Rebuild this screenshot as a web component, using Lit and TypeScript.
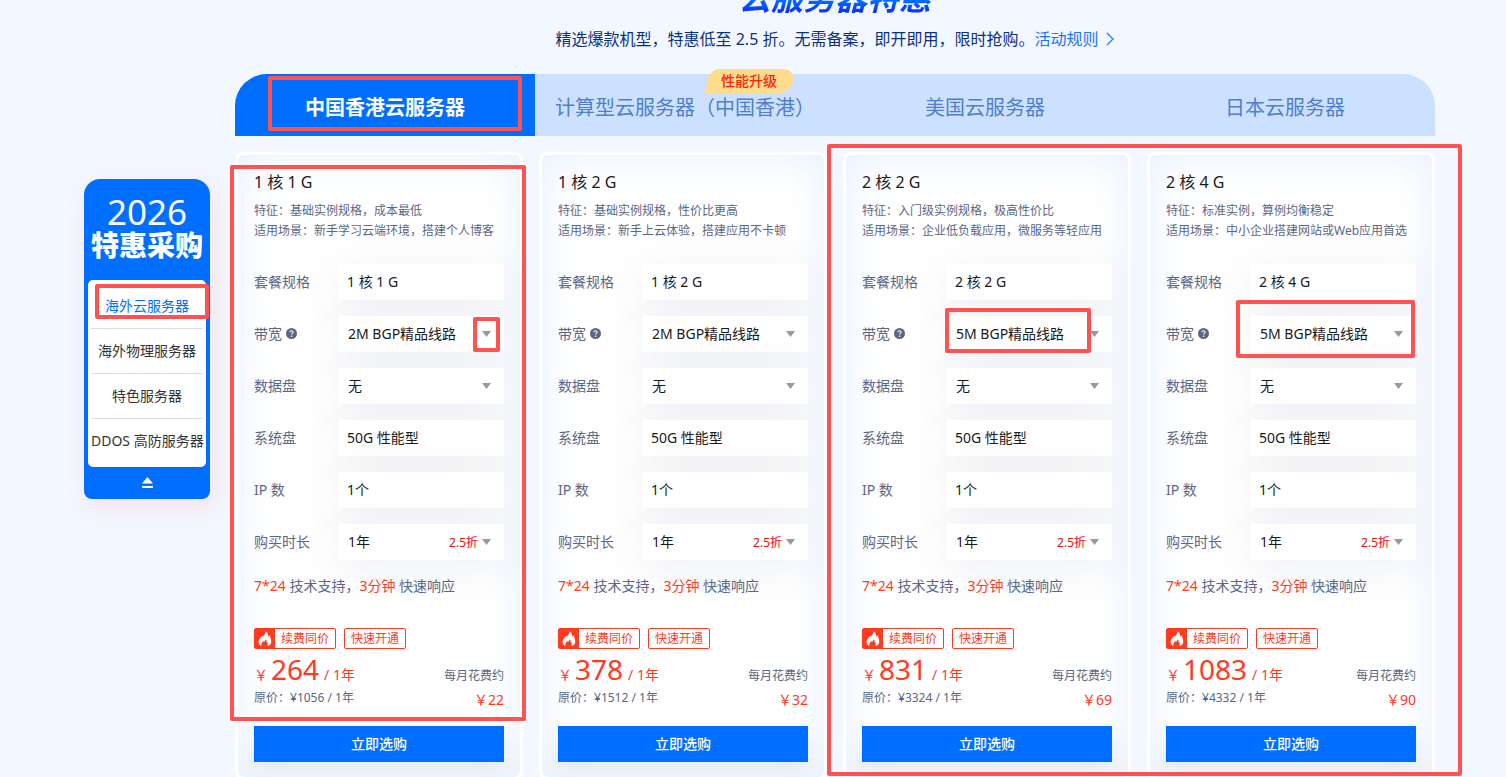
import { LitElement, html, css, svg } from "lit";
import { customElement, property, state } from "lit/decorators.js";

interface Plan {
  spec: string;
  feature: string;
  scene: string;
  bandwidth: string;
  price: number;
  original: number;
  monthly: number;
}

const PLANS: Plan[] = [
  { spec: "1 核 1 G", feature: "基础实例规格，成本最低", scene: "新手学习云端环境，搭建个人博客", bandwidth: "2M BGP精品线路", price: 264, original: 1056, monthly: 22 },
  { spec: "1 核 2 G", feature: "基础实例规格，性价比更高", scene: "新手上云体验，搭建应用不卡顿", bandwidth: "2M BGP精品线路", price: 378, original: 1512, monthly: 32 },
  { spec: "2 核 2 G", feature: "入门级实例规格，极高性价比", scene: "企业低负载应用，微服务等轻应用", bandwidth: "5M BGP精品线路", price: 831, original: 3324, monthly: 69 },
  { spec: "2 核 4 G", feature: "标准实例，算例均衡稳定", scene: "中小企业搭建网站或Web应用首选", bandwidth: "5M BGP精品线路", price: 1083, original: 4332, monthly: 90 },
];

const caret = svg`<svg class="caret" width="9" height="6" viewBox="0 0 9 6" aria-hidden="true"><path d="M0 0h9L4.5 6z" fill="#999"/></svg>`;

@customElement("plan-card")
export class PlanCard extends LitElement {
  static styles = css`
    :host {
      display: block;
      box-sizing: border-box;
      min-width: 0;
      padding: 15px 16px;
      border: 3px solid #fff;
      border-radius: 8px;
      background: #fff;
      box-shadow: inset 0 0 44px #e6f0ff;
      color: #5a6785;
    }
    h3 {
      margin: 0 0 7px;
      font-size: 16px;
      line-height: 24px;
      font-weight: 400;
      color: #1a1a1a;
    }
    p { margin: 0; }
    .desc {
      font-size: 12px;
      line-height: 20px;
      white-space: nowrap;
    }
    .rows {
      display: grid;
      gap: 16px;
      margin: 23px 0 16px;
      font-size: 14px;
    }
    .row {
      display: grid;
      grid-template-columns: 84px minmax(0, 1fr);
      align-items: center;
    }
    .name {
      display: flex;
      align-items: center;
      gap: 4px;
      padding-bottom: 2px;
    }
    .field {
      display: grid;
      grid-template-columns: minmax(0, 1fr);
      align-items: center;
      height: 36px;
      background: #fff;
      color: #1a1a1a;
      box-shadow: 0 8px 40px rgba(60, 80, 120, 0.09);
    }
    .field > * { grid-area: 1 / 1; }
    .text { padding: 0 0 2px 9px; }
    select {
      appearance: none;
      width: 100%;
      height: 36px;
      margin: 0;
      padding: 0 60px 2px 10px;
      border: 0;
      border-radius: 0;
      background: none;
      color: inherit;
      font: inherit;
    }
    .wide { padding-right: 24px; }
    .end {
      display: flex;
      align-items: center;
      justify-self: end;
      gap: 4px;
      padding-right: 13px;
      font-size: 12px;
      color: #f00a0a;
      pointer-events: none;
    }
    .support {
      font-size: 14px;
      line-height: 20px;
    }
    .red { color: #ff3a1e; }
    .tags {
      display: flex;
      gap: 8px;
      margin-top: 32px;
      font-size: 12px;
      line-height: 19px;
      color: #ff3a1e;
    }
    .tag {
      display: flex;
      border: 1px solid #ff3a1e;
      border-radius: 2px;
    }
    .tag span { padding: 0 6px; }
    .flame { background: #ff3a1e; }
    .costs {
      display: flex;
      justify-content: space-between;
      margin: 6px 0 16px;
      font-size: 12px;
      white-space: nowrap;
    }
    .price {
      display: flex;
      align-items: baseline;
      height: 33px;
      font-size: 14px;
      line-height: 28px;
      color: #ff3a1e;
    }
    .amount {
      margin: 0 5px 0 3px;
      font-size: 28px;
    }
    .original { line-height: 20px; }
    .monthly {
      padding-top: 11px;
      text-align: right;
      line-height: 20px;
    }
    .per {
      margin-top: 4px;
      font-size: 14px;
      color: #ff3a1e;
    }
    button {
      display: block;
      width: 100%;
      height: 36px;
      padding: 0 0 2px;
      border: 0;
      background: #006eff;
      color: #fff;
      font: inherit;
      font-size: 14px;
      font-weight: 500;
      box-shadow: 0 8px 20px rgba(60, 80, 120, 0.1);
    }
  `;

  @property({ attribute: false }) plan!: Plan;

  private fixed(name: string, value: string) {
    return html`<div class="row"><span class="name">${name}</span><div class="field"><span class="text">${value}</span></div></div>`;
  }

  render() {
    const p = this.plan;
    return html`
      <h3>${p.spec}</h3>
      <p class="desc">特征：${p.feature}</p>
      <p class="desc">适用场景：${p.scene}</p>
      <div class="rows">
        ${this.fixed("套餐规格", p.spec)}
        <div class="row">
          <label class="name" for="bandwidth">带宽
            <svg width="11" height="11" viewBox="0 0 11 11" aria-hidden="true">
              <circle cx="5.5" cy="5.5" r="5.5" fill="#5a6785" />
              <path d="M3.8 4.3c0-1 .7-1.6 1.7-1.6s1.7.6 1.7 1.5c0 1.1-1.6 1.2-1.6 2.3" fill="none" stroke="#fff" stroke-width="1.1" />
              <circle cx="5.6" cy="8.2" r=".75" fill="#fff" />
            </svg>
          </label>
          <div class="field"><select id="bandwidth" class="wide"><option>${p.bandwidth}</option></select><span class="end">${caret}</span></div>
        </div>
        <div class="row">
          <label class="name" for="disk">数据盘</label>
          <div class="field"><select id="disk"><option>无</option></select><span class="end">${caret}</span></div>
        </div>
        ${this.fixed("系统盘", "50G 性能型")}
        ${this.fixed("IP 数", "1个")}
        <div class="row">
          <label class="name" for="period">购买时长</label>
          <div class="field"><select id="period"><option>1年</option></select><span class="end">2.5折${caret}</span></div>
        </div>
      </div>
      <p class="support"><span class="red">7*24</span> 技术支持，<span class="red">3分钟</span> 快速响应</p>
      <div class="tags">
        <div class="tag">
          <svg class="flame" width="20" height="19" viewBox="0 0 20 19" aria-hidden="true">
            <path d="M10.6 2.2c.3 2.600-1.500 3.700-2.700 5.500-.3-.5-.4-.9-.9-1.300C6.800 8.400 3.600 9.800 3.600 13c0 2 1 3.400 2.800 4.300-.6-2.300.4-4 1.900-5.500.1.800.3 1.200.8 1.600.2-1.300.9-2.200 1.900-3 0 2.100 1.700 2.700 1.700 4.600 0 .9-.2 1.600-.6 2.300 2.400-.7 4.200-2.200 4.200-4.900 0-2.500-1.200-3.800-1.700-6.100-.5.500-.8 1-.9 1.700C12.900 6.200 13.100 3.800 10.600 2.200z" fill="#fff" />
          </svg>
          <span>续费同价</span>
        </div>
        <div class="tag"><span>快速开通</span></div>
      </div>
      <div class="costs">
        <div>
          <div class="price">￥<span class="amount">${p.price}</span>/ 1年</div>
          <div class="original">原价：¥${p.original} / 1年</div>
        </div>
        <div class="monthly">
          <div>每月花费约</div>
          <div class="per">￥${p.monthly}</div>
        </div>
      </div>
      <button type="button">立即选购</button>
    `;
  }
}

@customElement("side-menu")
export class SideMenu extends LitElement {
  static styles = css`
    :host {
      display: block;
      box-sizing: border-box;
      padding: 14px 4px 11px;
      border-radius: 16px 16px 8px 8px;
      background: #006eff;
      color: #fff;
      text-align: center;
      box-shadow: 4px 8px 24px rgba(255, 90, 110, 0.14);
    }
    .year {
      font-size: 35px;
      line-height: 38px;
    }
    .sale {
      font-size: 28px;
      line-height: 28px;
      font-weight: 900;
      white-space: nowrap;
    }
    nav {
      margin: 21px 0 10px;
      padding: 4px 3px;
      border-radius: 5px;
      background: #fff;
    }
    .item {
      display: block;
      font-size: 14px;
      line-height: 44px;
      border-bottom: 1px solid #ddd;
      color: #333;
      text-decoration: none;
      white-space: nowrap;
    }
    .item:last-child { border-bottom: 0; }
    .on { color: #006eff; }
    .fold {
      display: block;
      margin: 0 auto;
      padding: 0;
      border: 0;
      background: none;
    }
    .fold svg { display: block; }
  `;

  render() {
    return html`
      <div class="year">2026</div>
      <div class="sale">特惠采购</div>
      <nav>
        <a class="item on" href="#overseas">海外云服务器</a>
        <a class="item" href="#physical">海外物理服务器</a>
        <a class="item" href="#special">特色服务器</a>
        <a class="item" href="#ddos">DDOS 高防服务器</a>
      </nav>
      <button class="fold" type="button" aria-label="收起">
        <svg width="11" height="11" viewBox="0 0 11 11"><path d="M5.500 0L11 6.500H0zM0 9h11v2H0z" fill="#fff" /></svg>
      </button>
    `;
  }
}

@customElement("app-root")
export class AppRoot extends LitElement {
  static styles = css`
    :host {
      display: block;
      position: relative;
      min-height: 100vh;
      overflow: hidden;
      box-sizing: border-box;
      background: #f3f7ff;
      font-family: "Noto Sans", "Noto Sans CJK SC", sans-serif;
    }
    .page {
      display: grid;
      grid-template-columns: 126px minmax(0, 1fr);
      align-items: start;
      gap: 25px;
      padding: 0 71px 0 84px;
    }
    side-menu { margin-top: 179px; }
    main { min-width: 0; }
    header { text-align: center; }
    h2 {
      width: fit-content;
      margin: -22px auto 0;
      padding: 0 4px;
      font-size: 32px;
      line-height: 40px;
      font-weight: 700;
      font-style: italic;
      color: transparent;
      background: linear-gradient(#0090ff 40%, #0a30ff 85%);
      background-clip: text;
    }
    .lead {
      display: flex;
      align-items: center;
      justify-content: center;
      margin: 9px 0 23px;
      font-size: 16px;
      line-height: 24px;
      color: #0a3080;
      white-space: nowrap;
    }
    .lead a {
      display: flex;
      align-items: center;
      gap: 8px;
      color: #1a74ff;
      text-decoration: none;
    }
    .tabs {
      display: grid;
      grid-template-columns: repeat(4, minmax(0, 1fr));
      border-radius: 32px 32px 0 0;
      background: #cce1ff;
    }
    .tab {
      position: relative;
      height: 62px;
      padding: 2px 0 0;
      border: 0;
      background: none;
      color: #4f7fcb;
      font: inherit;
      font-size: 20px;
      white-space: nowrap;
    }
    .tab.on {
      border-radius: 32px 0 0 0;
      background: #006eff;
      color: #fff;
      font-weight: 700;
    }
    .badge {
      position: absolute;
      top: -5px;
      right: 42px;
      display: grid;
      place-items: center;
      width: 88px;
      height: 24px;
      color: #ff1f0f;
      font-size: 14px;
      line-height: 24px;
      font-weight: 500;
    }
    .badge > * { grid-area: 1 / 1; }
    .cards {
      display: grid;
      grid-template-columns: repeat(4, minmax(0, 1fr));
      gap: 16px;
      margin-top: 16px;
    }
    .mark {
      position: absolute;
      box-sizing: border-box;
      border: 4px solid #ff5252;
      border-radius: 2px;
      pointer-events: none;
    }
    .m1 { left: 268px; top: 76px; width: 254px; height: 55px; }
    .m2 { left: 95px; top: 284px; width: 114px; height: 35px; }
    .m3 { left: 230px; top: 165px; width: 296px; height: 556px; }
    .m4 { left: 473px; top: 317px; width: 27px; height: 35px; }
    .m5 { left: 827px; top: 144px; width: 635px; height: 632px; }
    .m6 { left: 945px; top: 308px; width: 146px; height: 45px; }
    .m7 { left: 1236px; top: 300px; width: 179px; height: 58px; }
  `;

  @state() private active = 0;

  private tabs = ["中国香港云服务器", "计算型云服务器（中国香港）", "美国云服务器", "日本云服务器"];

  render() {
    return html`
      <div class="page">
        <side-menu></side-menu>
        <main>
          <header>
            <h2>云服务器特惠</h2>
            <p class="lead">
              <span>精选爆款机型，特惠低至 2.5 折。无需备案，即开即用，限时抢购。</span>
              <a href="#rules">活动规则
                <svg width="8" height="14" viewBox="0 0 8 14" aria-hidden="true"><path d="M1 1l6 6-6 6" fill="none" stroke="#1a74ff" stroke-width="1.2" /></svg>
              </a>
            </p>
          </header>
          <div class="tabs">
            ${this.tabs.map((t, i) => html`
              <button type="button" class="tab ${i === this.active ? "on" : ""}" @click=${() => (this.active = i)}>
                ${t}
                ${i === 1 ? html`<span class="badge">
                  <svg width="88" height="24" viewBox="0 0 88 24" aria-hidden="true"><path d="M0 24L2 13C3.500 5 8 0 16 0H78C85 0 89 5 88 11C86.500 19 81 24 73 24Z" fill="#ffdc8b" /></svg>
                  <span>性能升级</span>
                </span>` : ""}
              </button>`)}
          </div>
          <div class="cards">${PLANS.map((p) => html`<plan-card .plan=${p}></plan-card>`)}</div>
        </main>
      </div>
      ${[1, 2, 3, 4, 5, 6, 7].map((n) => html`<div class="mark m${n}"></div>`)}
    `;
  }
}
